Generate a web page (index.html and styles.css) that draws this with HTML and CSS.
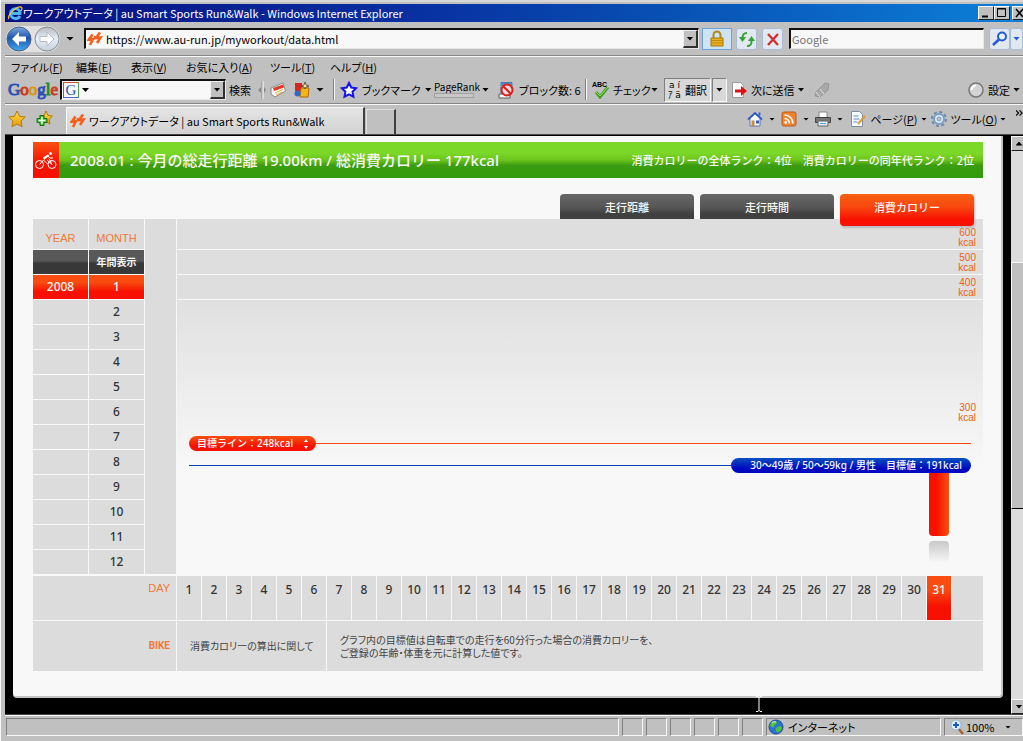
FILE: index.html
```html
<!DOCTYPE html>
<html lang="ja">
<head>
<meta charset="utf-8">
<title>ワークアウトデータ | au Smart Sports Run&amp;Walk</title>
<link rel="stylesheet" href="styles.css">
</head>
<body>
<svg class="defs" aria-hidden="true">
  <defs>
    <linearGradient id="blue" x1="0" y1="0" x2="0" y2="1"><stop offset="0" stop-color="#7fa8dc"/><stop offset=".45" stop-color="#1c55ae"/><stop offset="1" stop-color="#3fa9ea"/></linearGradient>
    <linearGradient id="pale" x1="0" y1="0" x2="0" y2="1"><stop offset="0" stop-color="#b9bcc2"/><stop offset=".5" stop-color="#e8edf4"/><stop offset="1" stop-color="#c4cfdb"/></linearGradient>
    <linearGradient id="gold" x1="0" y1="0" x2="0" y2="1"><stop offset="0" stop-color="#ffe14a"/><stop offset="1" stop-color="#e79a08"/></linearGradient>
    <symbol id="bolt" viewBox="0 0 16 16"><path d="M5.500 3.500 2 8.500l4-.5-3 6M13 1.500 9 7l4.500-.5L10 12M8 5v3.500" fill="none" stroke="#f4601c" stroke-width="2.600"/></symbol>
  </defs>
</svg>
<div class="window">
  <header class="titlebar">
    <svg class="i16" viewBox="0 0 16 16"><path d="M3 8.500h10C13 2 4 2 3.500 8.500 3.500 14 11 15 13 11" fill="none" stroke="#4fb4f4" stroke-width="2.800"/><path d="M2 14C-1 12 9 1 14 2c1.500.5 1 2 0 4" fill="none" stroke="#f4c430" stroke-width="1.300"/></svg>
    <h1>ワークアウトデータ | au Smart Sports Run&amp;Walk - Windows Internet Explorer</h1>
    <div class="caption">
      <button aria-label="最小化"><svg viewBox="0 0 14 12"><path d="M3 9.500h6" stroke="#000" stroke-width="2"/></svg></button>
      <button aria-label="最大化"><svg viewBox="0 0 14 12"><path d="M2.500 1.500h8v8h-8zM2 2h9" fill="none" stroke="#000"/></svg></button>
      <button class="close" aria-label="閉じる"><svg viewBox="0 0 14 12"><path d="m3 2 7 8m0-8-7 8" stroke="#000" stroke-width="1.500"/></svg></button>
    </div>
  </header>

  <div class="navbar">
    <div class="travel">
      <button aria-label="戻る"><svg viewBox="0 0 26 26"><circle cx="13" cy="13" r="12" fill="url(#blue)" stroke="#4c5f80"/><path d="m13 6-7 7 7 7v-4.500h7v-5h-7z" fill="#fff"/></svg></button>
      <button aria-label="進む"><svg viewBox="0 0 26 26"><circle cx="13" cy="13" r="12" fill="url(#pale)" stroke="#8a8d93"/><path d="m13 6 7 7-7 7v-4.500H6v-5h7z" fill="#fff" stroke="#b4bac4"/></svg></button>
    </div>
    <button class="arrow-button" aria-label="履歴"><i class="arrow big"></i></button>
    <div class="address field">
      <svg class="i16"><use href="#bolt"/></svg>
      <input type="text" aria-label="アドレス" value="https://www.au-run.jp/myworkout/data.html">
      <button class="drop" aria-label="アドレス一覧"><i class="arrow"></i></button>
    </div>
    <button class="tool lock" aria-label="セキュリティ"><svg class="i18" viewBox="0 0 18 18"><path d="M5.500 8V5a3.500 3.500 0 0 1 7 0v3" fill="none" stroke="#b5861c" stroke-width="2"/><path d="M3 8h12v8H3z" fill="#e8b020" stroke="#a87408"/><path d="M3 10.500h12M3 13h12" stroke="#c48a10"/></svg></button>
    <button class="tool refresh" aria-label="更新"><svg class="i18" viewBox="0 0 18 18"><path d="M9 3C5 3 4.500 5 4.500 8" fill="none" stroke="#35a035" stroke-width="2"/><path d="m1 7 3.500 5L8 7z" fill="#35a035"/><path d="M9 16c4 0 4.500-2 4.500-5" fill="none" stroke="#35a035" stroke-width="2"/><path d="m10 11 3.500-5 3.500 5z" fill="#35a035"/></svg></button>
    <button class="tool stop" aria-label="中止"><svg class="i18" viewBox="0 0 18 18"><path d="m4 4 10 11M14 4 4 15" stroke="#d22c30" stroke-width="2.300"/></svg></button>
    <div class="search field"><input type="text" aria-label="検索" placeholder="Google"></div>
    <div class="search-go">
      <button class="tool" aria-label="検索する"><svg class="i18" viewBox="0 0 18 18"><circle cx="11" cy="6.500" r="4" fill="#e8f2ff" stroke="#2458d4" stroke-width="2"/><path d="m8 9.500-6 5.500" stroke="#2458d4" stroke-width="2.500"/></svg></button>
      <button class="tool slim" aria-label="検索オプション"><i class="arrow blue"></i></button>
    </div>
  </div>

  <nav class="menubar">
    <button>ファイル(<u>F</u>)</button><button>編集(<u>E</u>)</button><button>表示(<u>V</u>)</button><button class="wide">お気に入り(<u>A</u>)</button><button>ツール(<u>T</u>)</button><button>ヘルプ(<u>H</u>)</button>
  </nav>

  <div class="googlebar">
    <span class="logo"><b class="gb">G</b><b class="gr">o</b><b class="gy">o</b><b class="gb">g</b><b class="gg">l</b><b class="gr">e</b></span>
    <div class="combo field">
      <span class="g-mark">G</span><i class="arrow"></i>
      <input type="text" aria-label="Google 検索">
      <button class="drop" aria-label="検索履歴"><i class="arrow"></i></button>
    </div>
    <button class="search-label">検索</button>
    <svg class="grip" viewBox="0 0 8 18"><path d="M4 0v18" stroke="#888"/><path d="M5 0v18" stroke="#f8f8f8"/><path d="m3 6-3 3 3 3zm3 0 2 3-2 3z" fill="#888"/></svg>
    <button aria-label="ニュース" class="news"><svg class="i18" viewBox="0 0 18 18"><path d="m2 7 12-5 2.500 8L6 16l-4-3z" fill="#f6f6f6" stroke="#8a8a8a"/><path d="m4 7 10-3.500 1 3L5 10z" fill="#e03a28"/><path d="m6 12 8-3.500m-7 5.500 6-3" stroke="#e9b83c"/></svg></button>
    <button aria-label="ガジェット" class="gadget"><svg class="i18" viewBox="0 0 18 18"><path d="M2 2h7v8H2z" fill="#d8261c"/><path d="M8 7h8l-1 9H7z" fill="#f4b41c" stroke="#a66c0c"/><circle cx="4.500" cy="12.500" r="3" fill="#2f66d0"/><path d="m12 1 1 3 3 1-3 1-1 2-1-2-3-1 3-1z" fill="#ffe88a" stroke="#333" stroke-width=".7"/></svg></button>
    <i class="arrow big"></i>
    <span class="rule"></span>
    <button class="bookmark"><svg class="i18" viewBox="0 0 18 18"><path d="m9 2 2.200 4.500 5 .7-3.700 3.500.9 5L9 13.400l-4.500 2.300.9-5L1.800 7.200l5-.7z" fill="#fff" stroke="#1414e8" stroke-width="2"/></svg><span>ブックマーク</span><i class="arrow"></i></button>
    <button class="pagerank"><span>PageRank</span><span class="meter"></span></button>
    <i class="arrow"></i>
    <button class="popup"><svg class="i18" viewBox="0 0 18 18"><path d="M3 1.500h11V12H3z" fill="#fff" stroke="#4878a8"/><path d="M3 2h11v3H3z" fill="#5588cc"/><path d="M1 13h11v4H1z" fill="#fff" stroke="#555"/><circle cx="9" cy="9" r="5.500" fill="#f6dada" stroke="#d6201c" stroke-width="2"/><path d="m5 5 8 8" stroke="#d6201c" stroke-width="2"/></svg><span>ブロック数: 6</span></button>
    <span class="rule"></span>
    <button class="check"><svg class="i18" viewBox="0 0 18 18"><text x="0" y="6" class="abc">ABC</text><path d="m4 11 4 5 8-10" fill="none" stroke="#3f9c1e" stroke-width="3"/><path d="m4 11 4 4 8-9" fill="none" stroke="#9be05a"/></svg><span>チェック</span></button>
    <i class="arrow"></i>
    <div class="translate">
      <button class="pressed"><span class="letters">a í<br>ｱ ä</span><span>翻訳</span></button>
      <button class="pressed" aria-label="翻訳オプション"><i class="arrow"></i></button>
    </div>
    <button class="send"><svg class="i18" viewBox="0 0 18 18"><path d="M2.500 1.500h8l3 3v12h-11z" fill="#fafafa" stroke="#999"/><path d="M5 8.500h6V5l6 5-6 5v-3.500H5z" fill="#d91418"/></svg><span>次に送信</span><i class="arrow"></i></button>
    <button aria-label="ハイライト"><svg class="i18" viewBox="0 0 18 18"><path d="m3 11 9-9 4 1-1 6-8 7-5-1z" fill="#a9a9a9" stroke="#969696"/><path d="m3 11 4 5m0-8 4 5" stroke="#e0e0e0"/></svg></button>
    <button class="settings"><svg class="i18" viewBox="0 0 18 18"><circle cx="9" cy="9" r="7" fill="#d4d4d4" stroke="#777" stroke-width="1.500"/><path d="M4.500 9A4.500 4.500 0 0 1 9 4.500" stroke="#fff" stroke-width="2" fill="none"/></svg><span>設定</span><i class="arrow"></i></button>
  </div>

  <div class="tabbar">
    <button aria-label="お気に入りセンター"><svg class="i18" viewBox="0 0 18 18"><path d="m9 1 2.500 5.300 5.700.7-4.200 4 1.100 5.700L9 14l-5.100 2.700L5 11 .8 7l5.700-.7z" fill="url(#gold)" stroke="#b8780c"/></svg></button>
    <button class="add" aria-label="お気に入りに追加"><svg class="i18" viewBox="0 0 18 18"><path d="m11 1 2 4.500 4.500.6-3.300 3.200.8 4.700-4-2.200L7 14l1-4.700L4.500 6 9 5.500z" fill="url(#gold)" stroke="#b8780c"/><path d="M5 5.500h4v3h3v4H9v3H5v-3H2v-4h3z" fill="#48bd35" stroke="#177015"/><path d="M7 7v7m-3.500-3.500h7" stroke="#e8ffe0" stroke-width="1.500"/></svg></button>
    <button class="tab"><svg class="i16"><use href="#bolt"/></svg><span>ワークアウトデータ | au Smart Sports Run&amp;Walk</span></button>
    <button class="new-tab" aria-label="新しいタブ"></button>
    <div class="commands">
      <button class="home" aria-label="ホーム"><svg class="i16" viewBox="0 0 16 16"><path d="M3 7v8h10V7L8 2.500z" fill="#f4f8ff" stroke="#6078a8"/><path d="M1 8.500 8 2l7 6.500M12.500 1.500v3" fill="none" stroke="#2e5cc4" stroke-width="1.800"/><path d="M4.500 9.500h3V15h-3z" fill="#c88c40"/><path d="M9 9.500h3v3H9z" fill="#2e5cc4"/></svg><i class="arrow small"></i></button>
      <button class="rss" aria-label="フィード"><svg class="i16" viewBox="0 0 16 16"><rect x="1" y="1" width="14" height="14" rx="2" fill="#ef8330" stroke="#bd5c18"/><circle cx="4.700" cy="11.500" r="1.400" fill="#fff"/><path d="M3.500 7.500a5 5 0 0 1 5 5M3.500 4a8.500 8.500 0 0 1 8.500 8.500" fill="none" stroke="#fff" stroke-width="1.600"/></svg><i class="arrow small"></i></button>
      <button class="print" aria-label="印刷"><svg class="i16" viewBox="0 0 16 16"><path d="M4 1h8v6H4z" fill="#fff" stroke="#888"/><path d="M.5 6.500h15v5H.5z" fill="#777" stroke="#444"/><path d="M3 10h10v5H3z" fill="#eee" stroke="#666"/><path d="M5 12.500h6" stroke="#44aadd"/></svg><i class="arrow small"></i></button>
      <button class="page-menu"><svg class="i18" viewBox="0 0 18 18"><path d="M2.500 1.500h8l3 3v12h-11z" fill="#f8fbff" stroke="#7c8ca8"/><path d="M4.500 6h5m-5 3h6m-6 3h4" stroke="#5b8bd0"/><path d="m9 14 7-8" stroke="#d99b3c" stroke-width="2"/></svg><span>ページ(<u>P</u>)</span><i class="arrow small"></i></button>
      <button class="tool-menu"><svg class="i18" viewBox="0 0 18 18"><circle cx="9" cy="9" r="7" fill="none" stroke="#6c88aa" stroke-width="2" stroke-dasharray="3 2.500"/><circle cx="9" cy="9" r="5" fill="#dceafa" stroke="#7d9dc2" stroke-width="2"/><circle cx="9" cy="9" r="2" fill="#c0c0c0" stroke="#7d9dc2"/></svg><span>ツール(<u>O</u>)</span><i class="arrow small"></i></button>
      <button class="more" aria-label="その他"><svg viewBox="0 0 8 8"><path d="m0 1 3 3-3 3m4-6 3 3-3 3" fill="none" stroke="#000" stroke-width="1.300"/></svg></button>
    </div>
  </div>

  <div class="viewport">
    <main class="page">
      <section class="sheet">
        <div class="summary">
          <svg class="bike" viewBox="0 0 26 36"><circle cx="6.500" cy="22.500" r="4"/><circle cx="19" cy="22.500" r="4"/><path d="m6.500 22.500 4-4.500 4 4M14 18l5 4.500-3-6M11 17.500l4-3.500 2 2h3"/><path d="m10.500 16.500 5-3.500" stroke-width="2"/><circle class="head" cx="17.500" cy="11.500" r="1"/></svg>
          <h2>2008.01 : 今月の総走行距離 19.00km / 総消費カロリー 177kcal</h2>
          <p>消費カロリーの全体ランク：4位　消費カロリーの同年代ランク：2位</p>
        </div>
        <div class="modes">
          <button>走行距離</button><button>走行時間</button><button class="on">消費カロリー</button>
        </div>
        <div class="board">
          <div class="calendar">
            <div class="label">YEAR</div><div class="label">MONTH</div>
            <div class="dark"></div><button class="dark all">年間表示</button>
            <button class="red">2008</button><button class="red">1</button>
            <div></div><button>2</button>
            <div></div><button>3</button>
            <div></div><button>4</button>
            <div></div><button>5</button>
            <div></div><button>6</button>
            <div></div><button>7</button>
            <div></div><button>8</button>
            <div></div><button>9</button>
            <div></div><button>10</button>
            <div></div><button>11</button>
            <div></div><button>12</button>
          </div>
          <div class="margin-cell"></div>
          <div class="chart">
            <div class="band">600<br>kcal</div>
            <div class="band">500<br>kcal</div>
            <div class="band">400<br>kcal</div>
            <div class="plot">
              <div class="tick">300<br>kcal</div>
              <div class="guide goal"><button>目標ライン：248kcal<svg viewBox="0 0 6 10"><path d="m3 0 2 3H1zm0 10 2-3H1z" fill="#fff"/></svg></button></div>
              <div class="guide norm"><span>30～49歳 / 50～59kg / 男性　目標値：191kcal</span></div>
              <div class="bar"></div>
              <div class="reflection"></div>
            </div>
          </div>
        </div>
        <div class="days">
          <div class="row-label">DAY</div>
          <button>1</button><button>2</button><button>3</button><button>4</button><button>5</button><button>6</button><button>7</button><button>8</button><button>9</button><button>10</button><button>11</button><button>12</button><button>13</button><button>14</button><button>15</button><button>16</button><button>17</button><button>18</button><button>19</button><button>20</button><button>21</button><button>22</button><button>23</button><button>24</button><button>25</button><button>26</button><button>27</button><button>28</button><button>29</button><button>30</button><button class="red">31</button>
          <div class="rest"></div>
        </div>
        <div class="notes">
          <div class="row-label">BIKE</div>
          <div class="topic">消費カロリーの算出に関して</div>
          <p>グラフ内の目標値は自転車での走行を60分行った場合の消費カロリーを、<br>ご登録の年齢・体重を元に計算した値です。</p>
        </div>
      </section>
      <svg class="cursor" viewBox="0 0 8 16"><path d="M1 .5h2l1 1 1-1h2M4 1v14M1 15.500h2l1-1 1 1h2" fill="none" stroke="#fff"/></svg>
    </main>
    <div class="scrollbar">
      <button aria-label="上へ"><i class="arrow up"></i></button>
      <div class="thumb"></div>
      <button aria-label="下へ"><i class="arrow"></i></button>
    </div>
  </div>

  <footer class="status">
    <div class="pane message"></div>
    <div class="pane"></div><div class="pane"></div><div class="pane"></div><div class="pane"></div><div class="pane"></div><div class="pane"></div>
    <div class="pane zone"><svg class="i16" viewBox="0 0 16 16"><circle cx="8" cy="8" r="7" fill="#2d74d2" stroke="#194c94"/><path d="M3 4c2-3 5-2 6-1 0 3-3 2-3 5-2 1-4-1-4-2zm6 4c3-2 5 0 5 1-1 3-3 5-5 4-2-2-1-3 0-5z" fill="#4cc43a"/><path d="M4 4q2-2 4-1" stroke="#d4f4ff" fill="none"/></svg><span>インターネット</span></div>
    <div class="pane zoom"><svg class="i16" viewBox="0 0 16 16"><path d="m9 9 5 6" stroke="#a06030" stroke-width="2.500"/><circle cx="7" cy="6" r="5" fill="#e0f0ff" stroke="#94b8dc"/><path d="M7 3v6M4 6h6" stroke="#1858cc" stroke-width="2"/></svg><span>100%</span><i class="arrow small"></i></div>
  </footer>
</div>
</body>
</html>
```

FILE: styles.css
```css
* { box-sizing: border-box; }
body { margin: 0; overflow: hidden; background: #c0c0c0; color: #000; font: 11px/16px "Noto Sans CJK JP", sans-serif; font-feature-settings: "palt"; }
button, input { margin: 0; padding: 0; border: 0; background: none; color: inherit; font: inherit; font-feature-settings: inherit; }
h1, h2, p { margin: 0; font: inherit; }
svg { display: block; flex: none; }
button { display: flex; align-items: center; flex: none; white-space: nowrap; }
.defs { position: absolute; width: 0; height: 0; }
.i16 { width: 16px; height: 16px; }
.i18 { width: 18px; height: 18px; }

.window { display: flex; flex-direction: column; height: 100vh; padding: 4px 0 3px 4px; border-left: 1px solid #f8f8f8; box-shadow: inset 0 2px #d8d8d8; }

.arrow { flex: none; width: 7px; height: 4px; background: #000; clip-path: polygon(0 0, 100% 0, 50% 100%); }
.arrow.big { width: 8px; }
.arrow.small { width: 6px; height: 3px; }
.arrow.up { clip-path: polygon(50% 0, 100% 100%, 0 100%); }
.arrow.blue { background: #2458d4; }
.field { display: flex; align-items: center; height: 21px; border: 1px solid #e8e8e8; border-top: 2px solid #101010; border-left: 2px solid #101010; background: #f8f8f8; }
.field input { flex: 1; min-width: 0; height: 16px; outline: 0; }
.field input::placeholder { color: #777; opacity: 1; }
.drop { justify-content: center; width: 15px; height: 18px; border: 1px solid #f0f0f0; border-right: 2px solid #303030; border-bottom: 2px solid #303030; background: #c0c0c0; }

.titlebar { display: flex; align-items: center; flex: none; height: 18px; padding-left: 2px; color: #fff; background: linear-gradient(90deg, #081080 0%, #0830a0 40%, #0850b4 65%, #0c80d8 100%); overflow: hidden; }
.titlebar h1 { flex: 1; line-height: 18px; white-space: nowrap; }
.caption { display: flex; margin-right: -5px; }
.caption button { width: 16px; height: 14px; border: 1px solid #f8f8f8; border-right-color: #202020; border-bottom-color: #202020; background: #c0c0c0; }
.caption .close { margin-left: 2px; }
.caption svg { width: 14px; height: 12px; }

.navbar { display: flex; align-items: center; flex: none; height: 34px; padding-left: 1px; border-bottom: 1px solid #858585; }
.travel { display: flex; gap: 2px; border-radius: 14px; background: #e2e2e2; }
.travel svg { width: 26px; height: 26px; }
.arrow-button { width: 24px; height: 20px; padding-left: 6px; }
.address { flex: 1; gap: 3px; padding-left: 1px; }
.tool { justify-content: center; width: 21px; height: 22px; border: 1px solid #a8bcd8; border-radius: 3px; background: #e2e8f0; }
.lock { width: 30px; margin-left: 3px; border-color: #70a0dc; border-radius: 0; background: #cde4f4; }
.refresh { margin: 0 5px 0 4px; }
.search { width: 195px; margin: 0 5px 0 6px; padding-left: 1px; }
.search-go { display: flex; }
.tool.slim { width: 13px; }

.menubar { display: flex; flex: none; height: 22px; padding: 1px 0 0 6px; border-top: 1px solid #f8f8f8; }
.menubar button { width: 60px; height: 18px; }
.menubar button:nth-child(1) { width: 65px; }
.menubar button:nth-child(2), .menubar button:nth-child(3) { width: 55px; }
.menubar button.wide { width: 84px; }

.googlebar { display: flex; align-items: center; flex: none; height: 26px; padding: 0 0 2px 3px; border-bottom: 1px solid #858585; }
.logo { width: 52px; font: 17px/20px "Liberation Serif", serif; }
.logo b { font-weight: 400; -webkit-text-stroke: 1px; }
.gb { color: #2c50b8; }
.gr { color: #cc3a20; }
.gy { color: #d49b14; }
.gg { color: #208b30; }
.combo { width: 166px; gap: 3px; }
.g-mark { width: 16px; height: 16px; margin-left: 1px; border: 1px solid; border-color: #d05040 #50a050 #4868c8 #4868c8; color: #2c50b8; font: 15px/14px "Liberation Serif", serif; text-align: center; }
.search-label { width: 32px; padding-left: 3px; }
.grip { width: 8px; height: 18px; margin-right: 3px; }
.news { margin-right: 6px; }
.gadget { margin-right: 5px; }
.rule { flex: none; width: 2px; height: 21px; margin: 0 5px 0 9px; border-left: 1px solid #808080; border-right: 1px solid #f8f8f8; }
.bookmark { width: 84px; gap: 4px; margin-right: 10px; }
.bookmark span, .send span { flex: 1; }
.pagerank { flex-direction: column; align-items: flex-start; width: 48px; font-size: 10px; line-height: 12px; }
.meter { width: 40px; height: 5px; border: 1px solid #a0a0a0; background: #c8c8c8; }
.popup { width: 87px; margin-left: 9px; gap: 3px; }
.googlebar .popup + .rule { margin-left: 0; }
.check { width: 59px; gap: 3px; }
.abc { font: bold 7px "Liberation Sans", sans-serif; }
.translate { display: flex; gap: 1px; margin: 0 3px 0 6px; }
.pressed { justify-content: center; gap: 4px; height: 24px; padding: 0 3px; border: 1px solid #808080; border-right-color: #f8f8f8; border-bottom-color: #f8f8f8; background: #d8d8d8; }
.letters { font: 9px/10px "DejaVu Sans", "Noto Sans CJK JP", sans-serif; }
.send { width: 74px; gap: 3px; margin-right: 9px; }
.settings { width: 53px; gap: 2px; margin: 0 3px 0 auto; }
.settings span { flex: 1; }

.tabbar { display: flex; flex: none; height: 31px; padding-left: 3px; border-top: 1px solid #f8f8f8; border-bottom: 1px solid #484848; }
.tabbar > button { height: 27px; }
.tabbar .add { margin: 0 13px 0 9px; }
.tabbar .tab { gap: 3px; width: 299px; height: 27px; padding-left: 3px; border: 1px solid #f8f8f8; border-right: 2px solid #404040; border-bottom: 0; background: linear-gradient(#e4e4e4, #d2d2d2); margin-top: 2px; }
.tabbar .new-tab { width: 30px; height: 25px; margin: 4px 0 0 1px; border: 1px solid #e0e0e0; border-right: 2px solid #404040; border-bottom: 0; }
.commands { display: flex; align-items: center; height: 28px; margin-left: auto; }
.commands button { gap: 6px; }
.home, .rss, .print { width: 34px; }
.commands .page-menu { width: 81px; gap: 2px; }
.commands .tool-menu { width: 86px; gap: 1px; }
.page-menu span, .tool-menu span { width: 50px; }
.more svg { width: 7px; height: 8px; margin-bottom: 12px; }

.viewport { display: flex; flex: 1; min-height: 0; border-top: 1px solid #000; border-bottom: 1px solid #404040; }
.page { position: relative; flex: 1; padding: 0 8px 16px; background: #000; display: flex; flex-direction: column; }
.sheet { flex: 1; padding: 6px 18px 24px 20px; border-right: 2px solid #c4c4c4; border-bottom: 2px solid #c4c4c4; border-radius: 0 0 4px 4px; background: #f8f8f8; }
.cursor { position: absolute; right: 248px; bottom: 2px; width: 8px; height: 16px; }
.scrollbar { display: flex; flex-direction: column; width: 12px; overflow: hidden; background: #dcdcdc; }
.scrollbar button { justify-content: center; width: 16px; height: 15px; border: 1px solid #f8f8f8; border-bottom-color: #202020; background: #c0c0c0; }
.thumb { flex: 0 0 247px; width: 16px; margin: 111px 0 auto; border: 1px solid #f8f8f8; border-bottom-color: #000; background: #c0c0c0; }

.summary, .modes, .guide { font-feature-settings: normal; }
.summary { display: flex; align-items: center; height: 36px; padding-right: 9px; color: #f8f8f8; background: linear-gradient(#7cd828 0 30%, #6cc41c 50%, #3c9c10 65%, #2f9c0c); }
.bike { width: 26px; height: 36px; background: linear-gradient(#f85010, #f81000 60%); fill: none; stroke: #fff; stroke-width: 1; }
.bike .head { fill: #fff; }
.summary h2 { flex: 1; padding-left: 11px; font: 500 15px/20px "Noto Sans", "Noto Sans CJK JP", sans-serif; }
.summary p { font-weight: 500; }

.modes { display: flex; justify-content: flex-end; gap: 6px; height: 25px; margin-top: 16px; padding-right: 9px; }
.modes button { justify-content: center; width: 134px; height: 25px; border-radius: 4px 4px 0 0; color: #f8f8f8; background: linear-gradient(#666 0, #585858 50%, #404040 80%); font-weight: 500; }
.modes .on { position: relative; height: 32px; padding-bottom: 6px; border-radius: 4px; background: linear-gradient(#f86010, #f84810 40%, #f81000 80%); box-shadow: 1px 2px 2px #bbb; }

.board { display: flex; gap: 1px; }
.calendar { display: grid; grid-template: 30px / 55px 55px; grid-auto-rows: 24px; gap: 1px; }
.calendar > *, .margin-cell, .days > *, .notes > * { background: #dcdcdc; }
.calendar button { justify-content: center; color: #333; font: 500 12px/16px "Noto Sans", sans-serif; }
.calendar .label { padding-top: 11px; color: #f07838; font: 11px/16px "Liberation Sans", sans-serif; text-align: center; }
.calendar .dark { background: linear-gradient(#585858 0 45%, #383838 55%); color: #f8f8f8; }
.calendar .all { font: 700 10px/16px "Noto Sans CJK JP", sans-serif; }
.board .red, .days .red { color: #f8f8f8; background: linear-gradient(#f84c10 0 30%, #f81000 70%); }
.margin-cell { width: 31px; }
.chart { display: flex; flex: 1; flex-direction: column; gap: 1px; }
.band, .tick { padding-right: 7px; color: #f06010; font: 10px/10px "Liberation Sans", sans-serif; text-align: right; }
.band { height: 24px; padding-top: 3px; background: #dedede; }
.band:first-child { height: 30px; padding-top: 9px; }
.plot { flex: 1; padding-top: 103px; background: linear-gradient(#e0e0e0, #f8f8f8 62%); }
.guide { display: flex; align-items: center; height: 15px; margin: 0 12px; }
.goal { margin-top: 13px; background: linear-gradient(#f84810, #f84810) center / 100% 1px no-repeat; }
.norm { justify-content: flex-end; margin-top: 7px; background: linear-gradient(#0840b8, #0840b8) center / 100% 1px no-repeat; }
.goal button, .norm span { height: 15px; border-radius: 8px; color: #f8f8f8; font: 500 10px/15px "Noto Sans", "Noto Sans CJK JP", sans-serif; }
.goal button { justify-content: space-between; width: 127px; padding: 0 7px 0 8px; background: linear-gradient(#f85010, #f81000 70%); }
.goal svg { width: 6px; height: 10px; }
.norm span { width: 240px; padding-right: 9px; text-align: right; background: linear-gradient(#0850c0, #0008c0 70%); }
.bar { width: 20px; height: 63px; margin: 0 34px 0 auto; border-radius: 0 0 4px 4px; background: linear-gradient(90deg, #f81000 35%, #f85010); }
.reflection { width: 20px; height: 22px; margin: 5px 34px 0 auto; border-radius: 4px; background: linear-gradient(#c8c8c8, #e0e0e0 50%, #f8f8f8); }

.days { display: flex; gap: 1px; height: 44px; margin-top: 2px; }
.days button { justify-content: center; width: 24px; padding-bottom: 16px; color: #333; font: 500 12px/16px "Noto Sans", sans-serif; }
.row-label { width: 143px; padding: 4px 6px 0 0; color: #f07838; font: 11px/16px "Liberation Sans", sans-serif; text-align: right; }
.rest { flex: 1; }
.notes { display: flex; gap: 1px; height: 50px; margin-top: 1px; color: #444; font-size: 10px; line-height: 13px; }
.notes .row-label { padding-top: 17px; font: 700 10px/16px Roboto, sans-serif; }
.topic { width: 149px; padding: 18px 0 0 13px; }
.notes p { flex: 1; padding: 12px 0 0 13px; }

.status { display: flex; gap: 3px; flex: none; height: 23px; padding: 2px 0 2px 1px; border-top: 1px solid #f8f8f8; }
.pane { display: flex; align-items: center; width: 21px; height: 18px; border: 1px solid #808080; border-right-color: #f8f8f8; border-bottom-color: #f8f8f8; }
.pane.message { flex: 1; }
.pane.zone { gap: 4px; width: 175px; padding-left: 1px; }
.pane.zoom { gap: 1px; width: 79px; padding-left: 4px; }
.zoom span { width: 38px; }
```
